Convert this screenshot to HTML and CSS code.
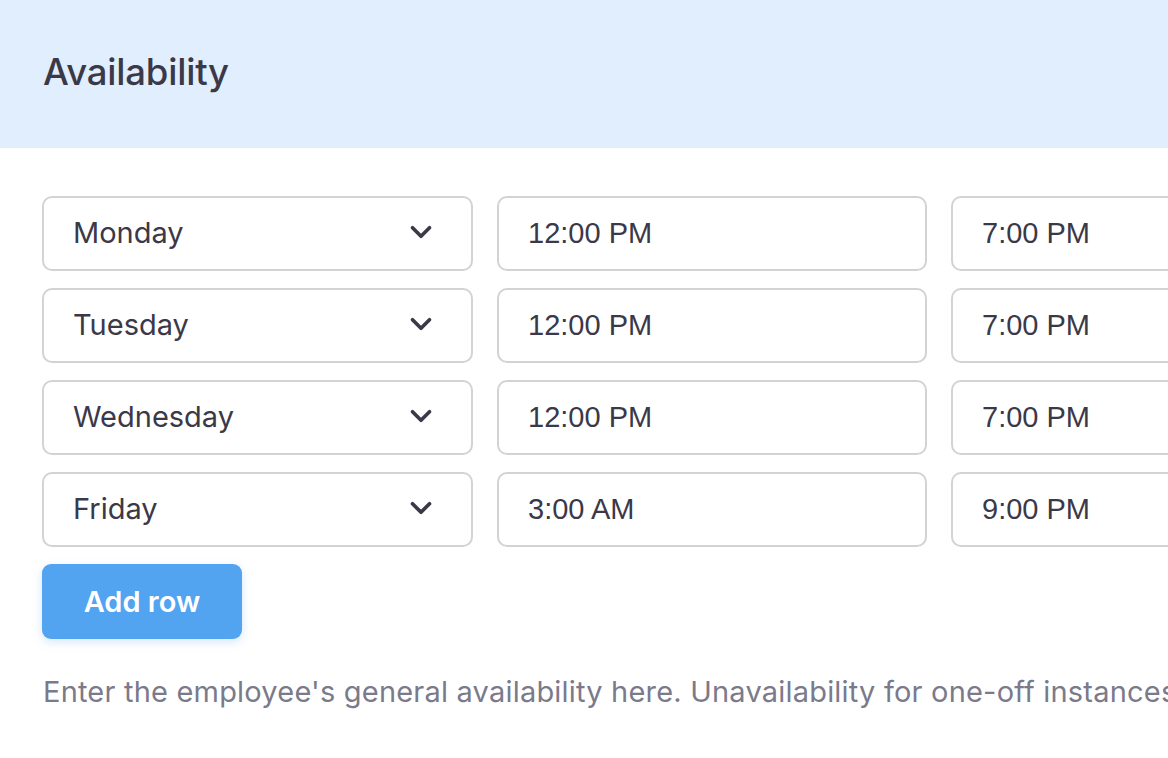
FILE: index.html
```html
<!DOCTYPE html>
<html lang="en">
  <head>
    <meta charset="UTF-8">
    <title>Availability</title>
    <link rel="stylesheet" href="styles.css">
  </head>
  <body>
    <div class="panel">
      <div class="panel-header">
        <h2>Availability</h2>
      </div>
      <div class="panel-body">
        <!-- one row per weekday -->
        <div class="avail-row">
          <div class="field select">
            <span>Monday</span>
            <svg class="chevron" viewBox="0 0 24 24"><path d="M6 9l6 6 6-6"/></svg>
          </div>
          <div class="field time">12:00 PM</div>
          <div class="field time">7:00 PM</div>
        </div>
        <div class="avail-row">
          <div class="field select">
            <span>Tuesday</span>
            <svg class="chevron" viewBox="0 0 24 24"><path d="M6 9l6 6 6-6"/></svg>
          </div>
          <div class="field time">12:00 PM</div>
          <div class="field time">7:00 PM</div>
        </div>
        <div class="avail-row">
          <div class="field select">
            <span>Wednesday</span>
            <svg class="chevron" viewBox="0 0 24 24"><path d="M6 9l6 6 6-6"/></svg>
          </div>
          <div class="field time">12:00 PM</div>
          <div class="field time">7:00 PM</div>
        </div>
        <div class="avail-row">
          <div class="field select">
            <span>Friday</span>
            <svg class="chevron" viewBox="0 0 24 24"><path d="M6 9l6 6 6-6"/></svg>
          </div>
          <div class="field time">3:00 AM</div>
          <div class="field time">9:00 PM</div>
        </div>
        <button class="add-button" type="button">Add row</button>
        <p class="help">Enter the employee's general availability here. Unavailability for one-off instances should be entered elsewhere.</p>
      </div>
    </div>
  </body>
</html>
```

FILE: styles.css
```css
body {
  margin: 0;
  font-family: "Inter", "Noto Sans", sans-serif;
  color: #3b3948;
  background: #ffffff;
  overflow: hidden;
}
.panel-header {
  background-color: #e1eefd;
  height: 148px;
  box-sizing: border-box;
  display: flex;
  align-items: center;
  padding: 0 43px 5px 43px;
}
.panel-header h2 {
  margin: 0;
  font-size: 36.5px;
  font-weight: 500;
  letter-spacing: -0.2px;
  color: #3b3948;
}
.panel-body {
  padding: 48px 0 0 42px;
}
.avail-row {
  display: grid;
  grid-template-columns: 431px 430px 430px;
  column-gap: 24px;
  margin-bottom: 17px;
}
.field {
  box-sizing: border-box;
  height: 75px;
  border: 2px solid #d3d3d6;
  border-radius: 10px;
  display: flex;
  align-items: center;
  padding: 0 29px;
  background: #fff;
}
.select {
  justify-content: space-between;
  font-size: 29px;
  padding-bottom: 3px;
}
.chevron {
  width: 34px;
  height: 34px;
  fill: none;
  stroke: #3b3948;
  stroke-width: 2.6;
  stroke-linecap: round;
  stroke-linejoin: round;
  margin-right: 4px;
}
.time {
  font-family: "Liberation Sans", Arial, sans-serif;
  font-size: 29px;
}
.add-button {
  width: 200px;
  height: 75px;
  border: none;
  border-radius: 9px;
  background-color: #52a3f0;
  color: #ffffff;
  font-family: "Inter", "Noto Sans", sans-serif;
  font-size: 29px;
  font-weight: 600;
  box-shadow: 0 3px 10px rgba(82, 163, 240, 0.25);
}
.help {
  margin: 35px 0 0 1px;
  font-size: 29px;
  letter-spacing: 0.2px;
  color: #7b7a8b;
  white-space: nowrap;
}
```
